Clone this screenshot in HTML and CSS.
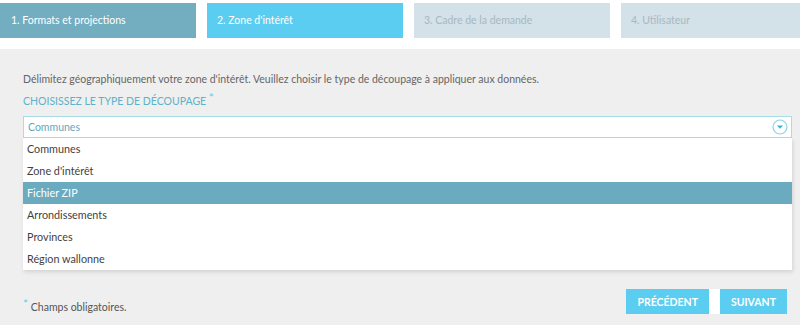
FILE: index.html
```html
<!DOCTYPE html>
<html lang="fr">
<head>
    <meta charset="UTF-8">
    <title>Zone d'intérêt</title>
    <link rel="stylesheet" href="styles.css">
</head>
<body>
    <div class="steps">
        <div class="step done">1. Formats et projections</div>
        <div class="step active">2. Zone d'intérêt</div>
        <div class="step">3. Cadre de la demande</div>
        <div class="step">4. Utilisateur</div>
    </div>

    <div class="panel">
        <p class="intro">Délimitez géographiquement votre zone d'intérêt. Veuillez choisir le type de découpage à appliquer aux données.</p>
        <div class="label">Choisissez le type de découpage <span class="req">*</span></div>

        <div class="select">
            <div class="select-value">
                <span>Communes</span>
                <svg class="select-icon" width="16" height="16" viewBox="0 0 16 16">
                    <circle cx="8" cy="8" r="7" fill="#fff" stroke="#8fd3e6" stroke-width="1.2"/>
                    <path d="M4.8 6.6 L11.2 6.6 L8 9.8 Z" fill="#3bb5dc"/>
                </svg>
            </div>
            <ul class="options">
                <li>Communes</li>
                <li>Zone d'intérêt</li>
                <li class="selected">Fichier ZIP</li>
                <li>Arrondissements</li>
                <li>Provinces</li>
                <li>Région wallonne</li>
            </ul>
        </div>

        <div class="footer">
            <div class="note"><span class="req">*</span> Champs obligatoires.</div>
            <div class="actions">
                <button class="btn">Précédent</button>
                <button class="btn next">Suivant</button>
            </div>
        </div>
    </div>
</body>
</html>
```

FILE: styles.css
```css
body {
    margin: 0;
    font-family: Lato, "Open Sans", sans-serif;
    font-size: 10.5px;
    color: #555;
    background: #fff;
    width: 800px;
    height: 325px;
    overflow: hidden;
}

.steps {
    display: flex;
    gap: 11px;
    padding-top: 3px;
    margin-bottom: 11px;
    white-space: nowrap;
}

.step {
    flex: 0 0 196px;
    height: 35px;
    line-height: 35px;
    padding: 0 10px;
    box-sizing: border-box;
    background: #d3e1e8;
    color: #a8b8c0;
}

.step.done {
    background: #73adc0;
    color: #fff;
    padding-left: 11px;
}

.step.active {
    background: #5bcdf0;
    color: #fff;
}

.panel {
    background: #efefef;
    height: 276px;
    padding: 22px 8px 0 23px;
    box-sizing: border-box;
}

.intro {
    margin: 0;
    line-height: 16px;
    color: #666;
}

.label {
    margin-top: 6px;
    line-height: 16px;
    font-size: 10.5px;
    text-transform: uppercase;
    color: #5cb2c9;
}

.req {
    color: #5bcdf0;
    vertical-align: 3px;
    line-height: 0;
    font-size: 12px;
}

.select {
    margin-top: 7px;
}

.select-value {
    display: flex;
    align-items: center;
    justify-content: space-between;
    height: 22px;
    box-sizing: border-box;
    padding: 0 3px 0 4px;
    background: #fff;
    border: 1px solid #a9dce9;
    color: #5fa8bd;
}

.select-icon {
    display: block;
}

.options {
    list-style: none;
    margin: 0;
    padding: 0;
    background: #fff;
    box-shadow: 1px 2px 4px rgba(0, 0, 0, 0.12);
}

.options li {
    height: 22px;
    line-height: 22px;
    padding-left: 4px;
    font-size: 10.8px;
    color: #3f3f3f;
}

.options li.selected {
    background: #6aabbf;
    color: #fff;
}

.footer {
    display: flex;
    justify-content: space-between;
    align-items: flex-end;
    margin-top: 19px;
    padding-right: 5px;
}

.note {
    color: #555;
    line-height: 16px;
    margin-bottom: -1px;
}

.actions {
    display: flex;
    background: #fff;
    gap: 11px;
}

.btn {
    height: 25px;
    padding: 0 11px;
    border: 0;
    background: #5bcdf0;
    color: #fff;
    font-family: Lato, "Open Sans", sans-serif;
    font-size: 10.5px;
    font-weight: bold;
    text-transform: uppercase;
}
```
